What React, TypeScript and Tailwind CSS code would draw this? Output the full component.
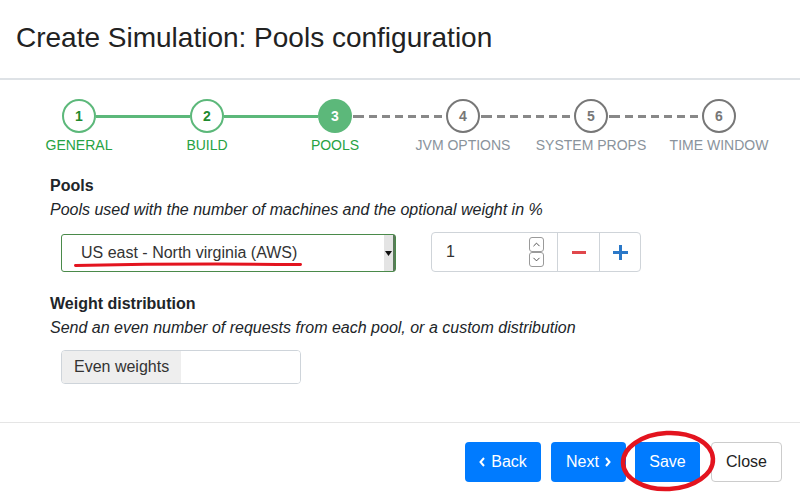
import { ChevronDown, ChevronUp } from "lucide-react";

const steps = [
  { n: 1, label: "GENERAL", state: "done" },
  { n: 2, label: "BUILD", state: "done" },
  { n: 3, label: "POOLS", state: "active" },
  { n: 4, label: "JVM OPTIONS", state: "todo" },
  { n: 5, label: "SYSTEM PROPS", state: "todo" },
  { n: 6, label: "TIME WINDOW", state: "todo" },
];

function Circle({ n, state }: { n: number; state: string }) {
  if (state === "active")
    return (
      <div className="w-[34px] h-[34px] shrink-0 rounded-full bg-[#5cb87a] flex items-center justify-center text-white font-bold text-[14px]">
        {n}
      </div>
    );
  if (state === "done")
    return (
      <div className="w-[34px] h-[34px] shrink-0 rounded-full border-2 border-[#5cb87a] bg-white flex items-center justify-center text-[#1f8a2e] font-bold text-[14px]">
        {n}
      </div>
    );
  return (
    <div className="w-[34px] h-[34px] shrink-0 rounded-full border-2 border-[#777] bg-white flex items-center justify-center text-[#777] font-bold text-[14px]">
      {n}
    </div>
  );
}

function Stepper() {
  return (
    <div className="pt-[19px]">
      <div className="flex items-center pl-[62px]">
        {steps.map((s, i) => (
          <div key={s.n} className="flex items-center">
            <Circle n={s.n} state={s.state} />
            {i < steps.length - 1 &&
              (i < 2 ? (
                <div className="w-[94px] h-[3px] bg-[#5cb87a]" />
              ) : (
                <div className="w-[94px] h-[3px] bg-[repeating-linear-gradient(90deg,#888_0_8px,transparent_8px_13px)] bg-[position:4px_0]" />
              ))}
          </div>
        ))}
      </div>
      <div className="grid grid-cols-6 w-[768px] ml-[15px] mt-[2px]">
        {steps.map((s) => (
          <div
            key={s.n}
            className={
              s.state === "todo"
                ? "text-center text-[14px] leading-5 text-[#8a939c]"
                : "text-center text-[14px] leading-5 text-[#27a243]"
            }
          >
            {s.label}
          </div>
        ))}
      </div>
    </div>
  );
}

function PoolRow() {
  return (
    <div className="flex items-start mt-[10px]">
      <div className="relative ml-[11px] mt-[2px] w-[335px] h-[38px] flex border border-[#4a8a4a] rounded-[3px] bg-white">
        <div className="flex-1 flex items-center pl-[19px] text-[16px] text-[#333]">
          US east - North virginia (AWS)
        </div>
        <div className="w-[11px] h-full bg-[#e4e4e4] border-r-2 border-[#5a7a5a] flex items-center justify-center">
          <svg width="7" height="5" viewBox="0 0 7 5">
            <path d="M0 0H7L3.5 5Z" fill="#111" />
          </svg>
        </div>
        <svg className="absolute left-[12px] top-[27px]" width="228" height="6" viewBox="0 0 228 6">
          <path d="M1.5 3.5 Q114 1.2 226.5 2.6" stroke="#e3141f" strokeWidth="3" fill="none" strokeLinecap="round" />
        </svg>
      </div>
      <div className="ml-[35px] w-[210px] h-[40px] flex border border-[#cfd4d9] rounded-[4px] bg-white">
        <div className="w-[125px] flex items-center justify-between pl-[14px] pr-[13px] text-[16px] text-[#333]">
          <span>1</span>
          <div className="flex flex-col">
            <div className="w-[15px] h-[15px] border border-[#9a9a9a] rounded-[3px] flex items-center justify-center">
              <ChevronUp size={11} strokeWidth={2} color="#444" />
            </div>
            <div className="w-[15px] h-[15px] border border-[#9a9a9a] rounded-[3px] flex items-center justify-center">
              <ChevronDown size={11} strokeWidth={2} color="#444" />
            </div>
          </div>
        </div>
        <div className="w-[42px] border-l border-[#cfd4d9] flex items-center justify-center">
          <div className="w-[14px] h-[3px] bg-[#e0474c]" />
        </div>
        <div className="flex-1 border-l border-[#cfd4d9] flex items-center justify-center">
          <svg width="15" height="15" viewBox="0 0 15 15">
            <path d="M0 7.5H15M7.5 0V15" stroke="#2a78c8" strokeWidth="3" />
          </svg>
        </div>
      </div>
    </div>
  );
}

export default function App() {
  return (
    <div
      className="relative w-[800px] h-[499px] bg-white overflow-hidden text-[#212529]"
      style={{ fontFamily: '"Liberation Sans", Arial, sans-serif' }}
    >
      <div className="h-[80px] border-b-2 border-[#dee2e6] pl-4 pt-[21px]">
        <h4 className="text-[28px] leading-[34px] text-[#222]">Create Simulation: Pools configuration</h4>
      </div>

      <Stepper />

      <div className="px-[50px]">
        <div className="mt-[19px] font-bold text-[16px] leading-6">Pools</div>
        <div className="italic text-[16px] leading-6">
          Pools used with the number of machines and the optional weight in %
        </div>
        <PoolRow />

        <div className="mt-[20px] font-bold text-[16px] leading-6">Weight distribution</div>
        <div className="italic text-[16px] leading-6">
          Send an even number of requests from each pool, or a custom distribution
        </div>
        <div className="mt-[10px] ml-[11px] w-[240px] h-[34px] flex border border-[#ced4da] rounded-[4px] overflow-hidden">
          <div className="w-[119px] bg-[#eeeeee] flex items-center pl-[12px] text-[16px] text-[#333]">Even weights</div>
          <div className="flex-1 bg-white" />
        </div>
      </div>

      <div className="mt-[38px] border-t border-[#e5e5e5] pt-[19px] pr-[18px] flex justify-end">
        <button className="w-[76px] h-[40px] rounded-[4px] bg-[#007bff] text-white text-[16px] flex items-center justify-center gap-[6px]">
          <svg width="6" height="10" viewBox="0 0 6 10">
            <path d="M5 1L1.5 5L5 9" stroke="white" strokeWidth="2" fill="none" />
          </svg>
          Back
        </button>
        <button className="ml-[10px] w-[75px] h-[40px] rounded-[4px] bg-[#007bff] text-white text-[16px] flex items-center justify-center gap-[6px]">
          Next
          <svg width="6" height="10" viewBox="0 0 6 10">
            <path d="M1 1L4.5 5L1 9" stroke="white" strokeWidth="2" fill="none" />
          </svg>
        </button>
        <button className="ml-[9px] w-[65px] h-[40px] rounded-[4px] bg-[#007bff] text-white text-[16px] flex items-center justify-center">
          Save
        </button>
        <button className="ml-[11px] w-[71px] h-[40px] rounded-[4px] border border-[#cccccc] bg-white text-[#222] text-[16px] flex items-center justify-center">
          Close
        </button>
      </div>

      <svg className="absolute left-[618px] top-[429px] pointer-events-none" width="100" height="66" viewBox="0 0 100 66">
        <ellipse cx="50" cy="32" rx="45" ry="28" stroke="#e3141f" strokeWidth="4.5" fill="none" transform="rotate(-3 50 32)" />
      </svg>
    </div>
  );
}
